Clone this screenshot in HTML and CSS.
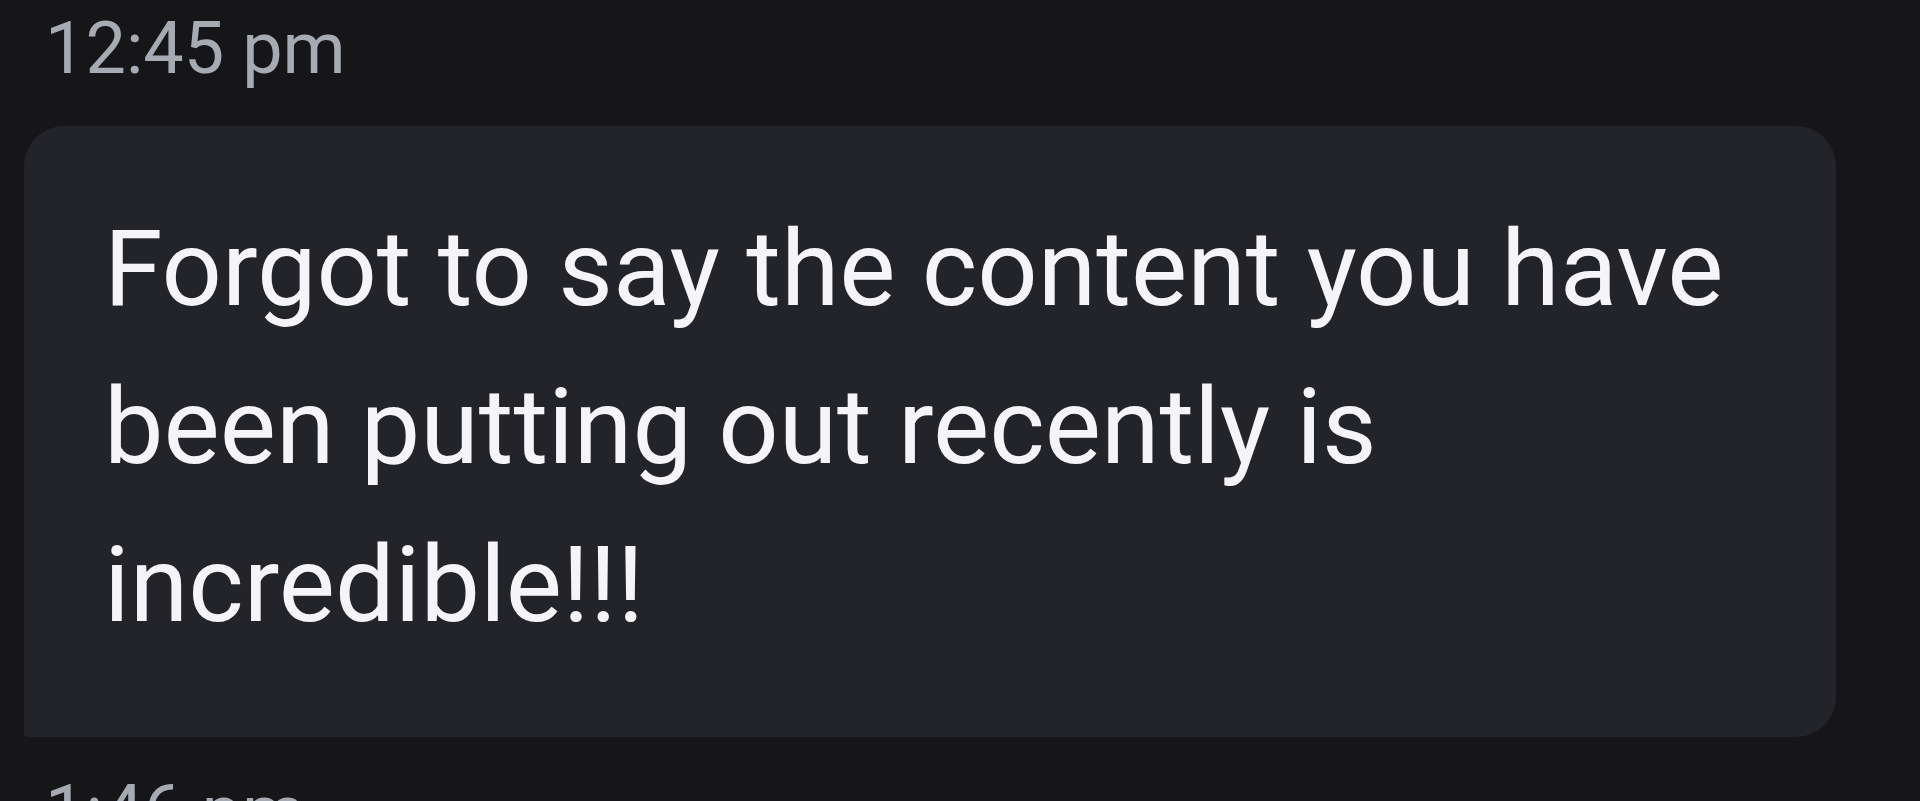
FILE: index.html
```html
<!DOCTYPE html>
<html lang="en">
<head>
<meta charset="utf-8">
<title>Messages</title>
<link rel="stylesheet" href="styles.css">
</head>
<body>
<main class="thread">
  <div class="time">12:45 pm</div>
  <div class="bubble">
    <p class="msg">Forgot to say the content you have been putting out recently is incredible!!!</p>
  </div>
  <div class="time time-next">1:46 pm</div>
</main>
</body>
</html>
```
FILE: styles.css
```css
html, body {
  margin: 0;
  padding: 0;
  height: 100%;
  overflow: hidden;
  background: #161618;
}
.thread {
  display: flex;
  flex-direction: column;
  align-items: flex-start;
  padding: 7px 84px 0 24px;
  font-family: Roboto, "Noto Sans", sans-serif;
}
.time {
  font-size: 72px;
  line-height: 84px;
  color: #a6aab2;
  padding-left: 21px;
}
.bubble {
  align-self: stretch;
  margin-top: 35px;
  background: #232429;
  border-radius: 40px 40px 40px 4px;
  padding: 64px 70px 73px 80px;
}
.msg {
  margin: 0;
  font-size: 106px;
  line-height: 158px;
  color: #f5f5f7;
}
.time-next {
  margin-top: 33px;
}
```
